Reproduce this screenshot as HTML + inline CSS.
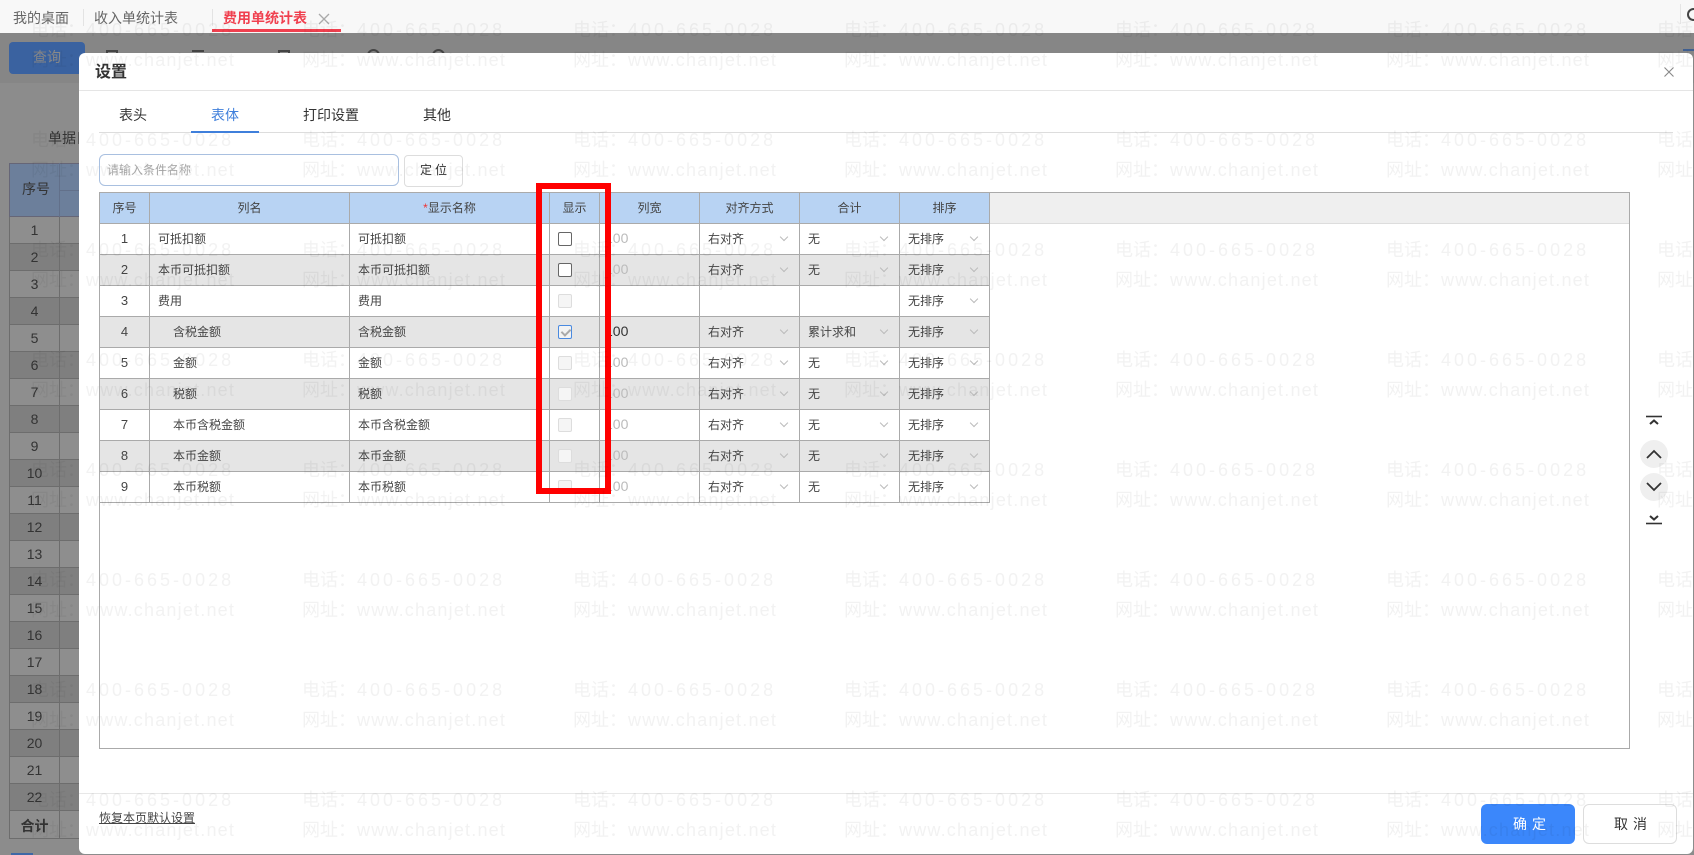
<!DOCTYPE html>
<html lang="zh">
<head>
<meta charset="utf-8">
<title>设置</title>
<style>
html,body{margin:0;padding:0}
body{width:1694px;height:855px;overflow:hidden;position:relative;background:#8c8c8c;font-family:"Liberation Sans","Noto Sans CJK SC",sans-serif;font-size:12px;color:#333}
.abs,.abs *{box-sizing:border-box}
.abs{position:absolute}
.t{position:absolute;white-space:nowrap;line-height:20px}
#top{left:0;top:0;width:1694px;height:33px;background:#f8f8f8}
#tool{left:0;top:33px;width:1694px;height:50px;background:#868686}
#ltab td{border-right:1px solid #6d6d6d;border-bottom:1px solid #6d6d6d;text-align:center;height:27px;padding:0;font-size:14px;color:#333;background:#8e8e8e}
#ltab tr:nth-child(even) td{background:#7f7f7f}
#ltab{border-collapse:separate;border-spacing:0;table-layout:fixed}
#dlg{left:79px;top:53px;width:1614px;height:801px;background:#fff;border-radius:6px}
#grid{left:99px;top:192px;width:1531px;height:557px;border:1px solid #aaa;background:#fff}
#strip{left:0;top:0;width:1529px;height:31px;background:#efefef;border-bottom:1px solid #ddd}
#tb{position:absolute;left:0;top:0;border-collapse:separate;border-spacing:0;table-layout:fixed;width:890px}
#tb td,#tb th{position:relative;height:31px;padding:0 0 2px 8px;border-right:1px solid #aaa;border-bottom:1px solid #aaa;font-size:12px;font-weight:400;text-align:left;color:#444;white-space:nowrap;overflow:hidden}
#tb th{background:#b8d3f3;text-align:center;padding:0 0 2px}
#tb tr:nth-child(odd) td{background:#e5e5e5}
#tb tr:nth-child(even) td{background:#fff}
#tb td.n{text-align:center;padding:0 0 2px;font-size:13px}
#tb td.i{padding-left:23px}
#tb td.w{color:#bbb;font-size:14px;padding-left:5px}
#tb td.dk{color:#333;font-size:14px;padding-left:5px}
#tb td.b{padding-bottom:0}
.s::after{content:"";position:absolute;right:12px;top:10px;width:5px;height:5px;border-right:1px solid #bbb;border-bottom:1px solid #bbb;transform:rotate(45deg)}
.c{display:inline-block;width:14px;height:14px;border:1px solid #666;border-radius:2px;background:#fff;vertical-align:middle;position:relative}
.c.d{border-color:#ddd;background:#f5f5f5}
.c.k{border-color:#4a8ae0;background:#f3f3f3}
.c.k::after{content:"";position:absolute;left:3.5px;top:1px;width:4px;height:7px;border-right:2px solid #aaa;border-bottom:2px solid #aaa;transform:rotate(45deg)}
.red{left:536px;top:183px;width:75px;height:311px;border:6px solid #f00}
.wm{position:absolute;left:0;top:0;pointer-events:none}
</style>
</head>
<body>
<div class="abs" id="tool"></div>
<div class="abs" id="top"></div>
<div class="t" style="left:13px;top:8px;font-size:14px;color:#666">我的桌面</div>
<div class="abs" style="left:83px;top:9px;width:1px;height:17px;background:#e3e3e3"></div>
<div class="t" style="left:94px;top:8px;font-size:14px;color:#666">收入单统计表</div>
<div class="abs" style="left:212px;top:9px;width:1px;height:17px;background:#e3e3e3"></div>
<div class="t" style="left:223px;top:8px;font-size:14px;color:#f0404f;font-weight:700">费用单统计表</div>
<svg class="abs" style="left:318px;top:13px" width="12" height="12" viewBox="0 0 12 12"><path d="M1 1L11 11M11 1L1 11" stroke="#aaa" stroke-width="1.3" fill="none"/></svg>
<div class="abs" style="left:212px;top:29px;width:129px;height:3px;background:#f0404f"></div>
<div class="abs" style="left:1680px;top:4px;width:1px;height:20px;background:#e5e5e5"></div>
<div class="abs" style="left:1687px;top:8px;width:13px;height:13px;border:2px solid #444;border-radius:50%"></div>

<div class="abs" style="left:9px;top:42px;width:76px;height:32px;background:#3a62a0;border-radius:4px"></div>
<div class="t" style="left:33px;top:47px;font-size:14px;color:#8a8a8a;letter-spacing:0">查询</div>
<div class="abs" style="left:106px;top:50px;width:12px;height:6px;border:2px solid #444"></div>
<div class="abs" style="left:192px;top:50px;width:12px;height:2px;background:#444"></div>
<div class="abs" style="left:278px;top:50px;width:12px;height:6px;border:2px solid #444"></div>
<div class="abs" style="left:367px;top:49px;width:13px;height:13px;border:2px solid #444;border-radius:50%"></div>
<div class="abs" style="left:432px;top:49px;width:13px;height:13px;border:2px solid #444;border-radius:50%"></div>
<div class="abs" style="left:1683px;top:49px;width:11px;height:2px;background:#3f5f90"></div>

<div class="t" style="left:48px;top:128px;font-size:14px;color:#333">单据日期</div>

<div class="abs" style="left:9px;top:163px;width:80px;height:54px;background:#6c7f9b;border:1px solid #667"></div>
<div class="abs" style="left:59px;top:163px;width:1px;height:54px;background:#62708a"></div>
<div class="abs" style="left:59px;top:190px;width:30px;height:1px;background:#62708a"></div>
<div class="t" style="left:22px;top:179px;font-size:14px;color:#333">序号</div>
<table class="abs" id="ltab" style="left:9px;top:217px;width:80px;border-left:1px solid #6d6d6d">
<colgroup><col style="width:50px"><col style="width:30px"></colgroup>
<tr><td>1</td><td></td></tr><tr><td>2</td><td></td></tr><tr><td>3</td><td></td></tr><tr><td>4</td><td></td></tr><tr><td>5</td><td></td></tr><tr><td>6</td><td></td></tr><tr><td>7</td><td></td></tr><tr><td>8</td><td></td></tr><tr><td>9</td><td></td></tr><tr><td>10</td><td></td></tr><tr><td>11</td><td></td></tr><tr><td>12</td><td></td></tr><tr><td>13</td><td></td></tr><tr><td>14</td><td></td></tr><tr><td>15</td><td></td></tr><tr><td>16</td><td></td></tr><tr><td>17</td><td></td></tr><tr><td>18</td><td></td></tr><tr><td>19</td><td></td></tr><tr><td>20</td><td></td></tr><tr><td>21</td><td></td></tr><tr><td>22</td><td></td></tr>
<tr><td style="background:#8e8e8e;font-weight:700;height:28px;padding-top:3px">合计</td><td style="background:#8e8e8e;height:28px"></td></tr>
</table>
<div class="abs" style="left:11px;top:853px;width:22px;height:2px;background:#3f68a6"></div>

<div class="abs" id="dlg"></div>
<div class="t" style="left:95px;top:62px;font-size:16px;color:#333;font-weight:700;margin-top:1px">设置</div>
<svg class="abs" style="left:1664px;top:67px" width="10" height="10" viewBox="0 0 10 10"><path d="M.5 .5L9.5 9.5M9.5 .5L.5 9.5" stroke="#888" stroke-width="1.1" fill="none"/></svg>
<div class="abs" style="left:79px;top:90px;width:1614px;height:1px;background:#e5e5e5"></div>

<div class="t" style="left:119px;top:105px;font-size:14px;color:#333">表头</div>
<div class="t" style="left:211px;top:105px;font-size:14px;color:#3f7fdb">表体</div>
<div class="t" style="left:303px;top:105px;font-size:14px;color:#333">打印设置</div>
<div class="t" style="left:423px;top:105px;font-size:14px;color:#333">其他</div>
<div class="abs" style="left:99px;top:132px;width:1574px;height:1px;background:#ddd"></div>
<div class="abs" style="left:191px;top:131px;width:68px;height:2px;background:#3f7fdb"></div>

<div class="abs" style="left:99px;top:154px;width:300px;height:32px;border:1px solid #a9c0e0;border-radius:6px;background:#fff"></div>
<div class="t" style="left:107px;top:160px;font-size:12px;color:#aaa">请输入条件名称</div>
<div class="abs" style="left:404px;top:155px;width:59px;height:32px;border:1px solid #ddd;border-radius:4px;background:#fff"></div>
<div class="t" style="left:420px;top:160px;font-size:12px;color:#333;letter-spacing:3px">定位</div>

<div class="abs" id="grid">
<div class="abs" id="strip"></div>
<table id="tb">
<colgroup><col style="width:50px"><col style="width:200px"><col style="width:200px"><col style="width:50px"><col style="width:100px"><col style="width:100px"><col style="width:100px"><col style="width:90px"></colgroup>
<tr><th>序号</th><th>列名</th><th><span style="color:#e33">*</span>显示名称</th><th>显示</th><th>列宽</th><th>对齐方式</th><th>合计</th><th>排序</th></tr>
<tr><td class="n">1</td><td>可抵扣额</td><td>可抵扣额</td><td class="b"><span class="c"></span></td><td class="w">100</td><td class="s">右对齐</td><td class="s">无</td><td class="s">无排序</td></tr>
<tr><td class="n">2</td><td>本币可抵扣额</td><td>本币可抵扣额</td><td class="b"><span class="c"></span></td><td class="w">100</td><td class="s">右对齐</td><td class="s">无</td><td class="s">无排序</td></tr>
<tr><td class="n">3</td><td>费用</td><td>费用</td><td class="b"><span class="c d"></span></td><td class="w"></td><td></td><td></td><td class="s">无排序</td></tr>
<tr><td class="n">4</td><td class="i">含税金额</td><td>含税金额</td><td class="b"><span class="c k"></span></td><td class="dk">100</td><td class="s">右对齐</td><td class="s">累计求和</td><td class="s">无排序</td></tr>
<tr><td class="n">5</td><td class="i">金额</td><td>金额</td><td class="b"><span class="c d"></span></td><td class="w">100</td><td class="s">右对齐</td><td class="s">无</td><td class="s">无排序</td></tr>
<tr><td class="n">6</td><td class="i">税额</td><td>税额</td><td class="b"><span class="c d"></span></td><td class="w">100</td><td class="s">右对齐</td><td class="s">无</td><td class="s">无排序</td></tr>
<tr><td class="n">7</td><td class="i">本币含税金额</td><td>本币含税金额</td><td class="b"><span class="c d"></span></td><td class="w">100</td><td class="s">右对齐</td><td class="s">无</td><td class="s">无排序</td></tr>
<tr><td class="n">8</td><td class="i">本币金额</td><td>本币金额</td><td class="b"><span class="c d"></span></td><td class="w">100</td><td class="s">右对齐</td><td class="s">无</td><td class="s">无排序</td></tr>
<tr><td class="n">9</td><td class="i">本币税额</td><td>本币税额</td><td class="b"><span class="c d"></span></td><td class="w">100</td><td class="s">右对齐</td><td class="s">无</td><td class="s">无排序</td></tr>
</table>
</div>

<div class="abs red"></div>

<svg class="abs" style="left:1636px;top:410px" width="36" height="120" viewBox="0 0 36 120">
<circle cx="18" cy="44" r="14" fill="#efefef"/><circle cx="18" cy="77" r="14" fill="#efefef"/>
<path d="M10 6.5H26" stroke="#333" stroke-width="1.6" fill="none"/>
<path d="M14 14L18 10.5L22 14" stroke="#333" stroke-width="2" fill="none"/>
<path d="M11 48L18 41L25 48" stroke="#333" stroke-width="1.8" fill="none"/>
<path d="M11 73L18 80L25 73" stroke="#333" stroke-width="1.8" fill="none"/>
<path d="M14 106L18 109.5L22 106" stroke="#333" stroke-width="2" fill="none"/>
<path d="M10 113.5H26" stroke="#333" stroke-width="1.6" fill="none"/>
</svg>

<div class="abs" style="left:79px;top:793px;width:1614px;height:1px;background:#e8e8e8"></div>
<div class="t" style="left:99px;top:808px;font-size:12px;color:#444;text-decoration:underline">恢复本页默认设置</div>
<div class="abs" style="left:1481px;top:804px;width:94px;height:40px;background:#3b87fb;border-radius:6px"></div>
<div class="t" style="left:1513px;top:814px;font-size:14px;color:#fff;letter-spacing:5px">确定</div>
<div class="abs" style="left:1583px;top:804px;width:94px;height:40px;background:#fff;border:1px solid #ddd;border-radius:6px"></div>
<div class="t" style="left:1614px;top:814px;font-size:14px;color:#333;letter-spacing:5px">取消</div>

<svg class="wm" width="1694" height="855" viewBox="0 0 1694 855">
<defs>
<pattern id="p" patternUnits="userSpaceOnUse" x="31" y="20" width="271" height="110">
<g fill="#000" fill-opacity="0.05" font-size="18" font-family="'Liberation Sans','Noto Sans CJK SC',sans-serif">
<text x="0" y="16">电话：</text><text x="55" y="16" letter-spacing="3">400-665-0028</text>
<text x="0" y="46">网址：</text><text x="55" y="46" letter-spacing="1.2">www.chanjet.net</text>
</g>
</pattern>
</defs>
<rect width="1694" height="855" fill="url(#p)"/>
</svg>
</body>
</html>
